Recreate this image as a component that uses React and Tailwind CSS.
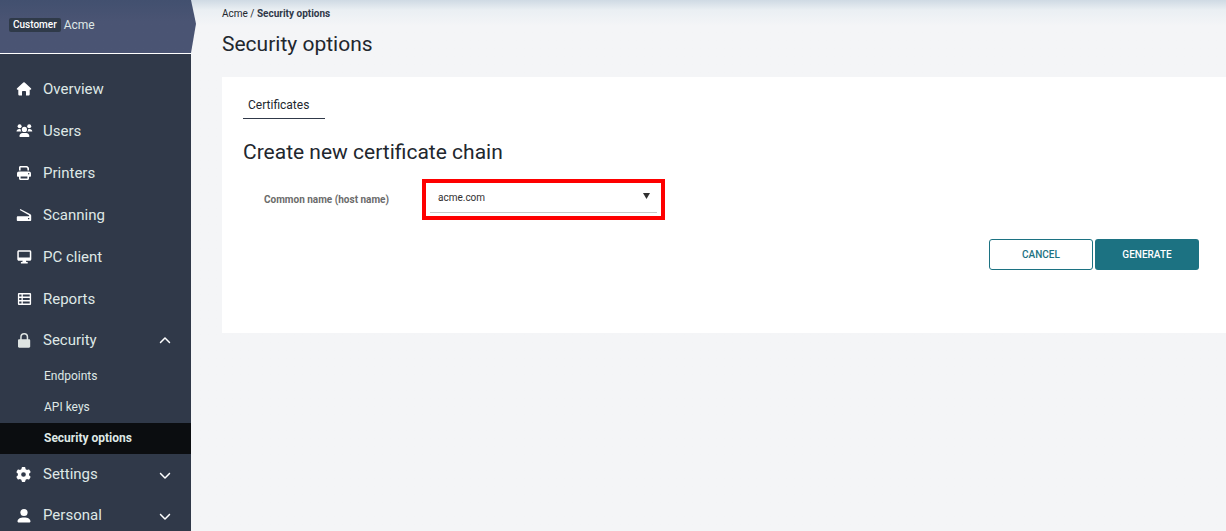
import { FaChevronDown, FaChevronUp, FaGear } from 'react-icons/fa6';

const Glyph = ({ className = '', children }) => (
  <svg viewBox="0 0 16 16" fill="currentColor" aria-hidden="true" className={className}>
    {children}
  </svg>
);

const HouseIcon = (props) => (
  <Glyph {...props}>
    <path d="M8 1.2a1 1 0 0 1 .7.3l6.2 5.7c.7.7.3 1.500-.5 1.500h-.7v4.600c0 .8-.5 1.300-1.300 1.300H10v-3.800a.8.8 0 0 0-.8-.8H6.800a.8.8 0 0 0-.8.8v3.800H3.600c-.8 0-1.300-.5-1.300-1.300V8.700h-.7c-.8 0-1.200-.8-.5-1.500l6.200-5.700A1 1 0 0 1 8 1.200z" />
  </Glyph>
);

const UsersIcon = (props) => (
  <Glyph {...props}>
    <circle cx="3.6" cy="3.2" r="2" />
    <circle cx="13.2" cy="3.2" r="2" />
    <circle cx="8.4" cy="6.4" r="2.6" />
    <path d="M.5 8.6C.5 7 1.7 6 3.2 6h1.3c.2 1.1.3 1.8 1.1 2.6zM16.3 8.6c0-1.6-1.2-2.6-2.7-2.6h-1.3c-.2 1.1-.3 1.8-1.1 2.6zM3.4 13.2c0-2 1.4-3.3 3.2-3.3h3.600c1.800 0 3.200 1.300 3.200 3.300 0 .5-.3.8-.8.8H4.200c-.5 0-.8-.3-.8-.8z" />
  </Glyph>
);

const PrinterIcon = (props) => (
  <Glyph {...props}>
    <path
      fillRule="evenodd"
      d="M4.500 1h6.700L13 2.800V5.500h-1.600V3.400l-.9-.8H4.600v2.900H3V2.500C3 1.600 3.600 1 4.500 1zM3 6.400h10c1.200 0 2 .8 2 2v2.400c0 .6-.4 1-1 1h-1v1.700c0 .9-.6 1.500-1.500 1.500h-7c-.9 0-1.500-.6-1.500-1.500v-1.700H2c-.6 0-1-.4-1-1V8.400c0-1.200.8-2 2-2zm1.600 5v2h6.800v-2zM12.700 8a.7.7 0 1 0 0 1.400.7.7 0 0 0 0-1.400z"
    />
  </Glyph>
);

const ScannerIcon = (props) => (
  <Glyph {...props}>
    <path
      fillRule="evenodd"
      d="M4.3 2 14 6.900c.8.400 1.200.9 1.200 1.700v4.300c0 .7-.4 1.100-1.100 1.100H1.900c-.7 0-1.100-.4-1.100-1.100v-2.600c0-.7.400-1.100 1.100-1.100h11.200v-1L3.800 3zM12 11v1.200h1.300V11z"
    />
  </Glyph>
);

const DesktopIcon = (props) => (
  <Glyph {...props}>
    <path
      fillRule="evenodd"
      d="M2.800 1.200h11c.8 0 1.500.7 1.500 1.500v7.600c0 .8-.7 1.500-1.500 1.500H9.900l.4 1.300h1.400v1.300H4.900v-1.300h1.400l.4-1.300H2.800c-.8 0-1.500-.7-1.500-1.500V2.700c0-.8.7-1.500 1.500-1.500zm0 1.500v5.900h11V2.700z"
    />
  </Glyph>
);

const TableIcon = (props) => (
  <Glyph {...props}>
    <path
      fillRule="evenodd"
      d="M3.200 2h10.600c.8 0 1.300.5 1.300 1.300v9.400c0 .8-.5 1.300-1.300 1.300H3.200c-.8 0-1.300-.5-1.300-1.300V3.300C1.900 2.500 2.400 2 3.200 2zm0 1.500v2h2.300v-2zm3.600 0v2h6.900v-2zM3.200 7v2h2.300V7zm3.600 0v2h6.900V7zm-3.600 3.500v2h2.300v-2zm3.600 0v2h6.900v-2z"
    />
  </Glyph>
);

const LockIcon = () => (
  <Glyph className="size-4 shrink-0 text-[#dfe5e3]">
    <path
      fillRule="evenodd"
      d="M8.200 0a4 4 0 0 1 4 4v2.200h.8c.7 0 1.200.5 1.200 1.200v6.200c0 .7-.5 1.200-1.200 1.200H3.200c-.7 0-1.200-.5-1.200-1.200V7.400c0-.7.500-1.200 1.200-1.200h1V4a4 4 0 0 1 4-4zm0 1.500A2.500 2.500 0 0 0 5.700 4v2.200h5V4a2.500 2.500 0 0 0-2.500-2.500z"
    />
  </Glyph>
);

const GearIcon = () => (
  <span className="flex size-4 shrink-0 items-center text-white">
    <FaGear className="size-[15px]" />
  </span>
);

const PersonIcon = (props) => (
  <Glyph {...props}>
    <circle cx="8" cy="4.5" r="3.6" />
    <path d="M1.500 13.600C1.500 10.800 4 9.400 8 9.400s6.500 1.400 6.500 4.200c0 .5-.3.8-.8.8H2.300c-.5 0-.8-.3-.8-.8z" />
  </Glyph>
);

const mainItems = [
  { label: 'Overview', icon: HouseIcon },
  { label: 'Users', icon: UsersIcon },
  { label: 'Printers', icon: PrinterIcon },
  { label: 'Scanning', icon: ScannerIcon },
  { label: 'PC client', icon: DesktopIcon },
  { label: 'Reports', icon: TableIcon },
];

const securityItems = [
  { label: 'Endpoints' },
  { label: 'API keys' },
  { label: 'Security options', active: true },
];

const ItemContent = ({ icon: Icon, label }) => (
  <>
    <Icon className="size-4 shrink-0 overflow-visible text-white" />
    <span className="ml-[11px]">{label}</span>
  </>
);

const NavGroup = ({ icon, label, open, children }) => {
  const Chevron = open ? FaChevronUp : FaChevronDown;
  return (
    <li>
      <button
        type="button"
        aria-expanded={!!open}
        className="flex h-[41px] w-full items-center pr-5 pl-4 text-[15px] text-[#dfe8e6]"
      >
        <ItemContent icon={icon} label={label} />
        <Chevron className="ml-auto size-3 text-white" />
      </button>
      {children}
    </li>
  );
};

const Sidebar = () => (
  <aside className="w-[191px] shrink-0 bg-[#303949]">
    <div className="relative h-[54px] border-b border-white">
      <div className="absolute top-0 left-0 flex h-[53px] w-[196px] items-center bg-linear-to-b from-[#42506f] to-[#4a5473] to-40% pb-1 pl-[9px] [clip-path:polygon(0_0,191px_0,100%_45%,191px_100%,0_100%)]">
        <span className="rounded-xs bg-[#2f3a49] px-1 text-[10px] leading-[14px] font-medium text-white">Customer</span>
        <span className="ml-[3px] text-xs text-[#dfe8e6]">Acme</span>
      </div>
    </div>
    <nav className="pt-[14px]">
      <ul>
        {mainItems.map((item) => (
          <li key={item.label}>
            <a href="#" className="flex h-[42px] items-center pl-4 text-[15px] text-[#dfe8e6]">
              <ItemContent {...item} />
            </a>
          </li>
        ))}
        <NavGroup icon={LockIcon} label="Security" open>
          <ul>
            {securityItems.map((item) => (
              <li key={item.label}>
                <a
                  href="#"
                  className={`flex h-[31px] items-center pb-0.5 pl-11 text-xs text-[#dfe8e6] ${item.active ? 'bg-[#0b0d10] font-bold' : ''}`}
                >
                  {item.label}
                </a>
              </li>
            ))}
          </ul>
        </NavGroup>
        <NavGroup icon={GearIcon} label="Settings" />
        <NavGroup icon={PersonIcon} label="Personal" />
      </ul>
    </nav>
  </aside>
);

const App = () => {
  return (
    <div className="flex h-screen overflow-hidden bg-[#f4f5f7] font-[Roboto,sans-serif] text-[#22272e]">
      <Sidebar />
      <main className="min-w-0 flex-1 bg-linear-to-b from-[#cfdae4] via-[#eaeff3] via-[10px] to-[#f4f5f7] to-[26px] pl-[31px]">
        <nav aria-label="Breadcrumb" className="pt-[7px] text-[10px] leading-[14px]">
          <a href="#">Acme</a> / <span className="font-bold text-[#303949]">Security options</span>
        </nav>
        <h1 className="mt-[9px] text-[21px] leading-7">Security options</h1>
        <section className="mt-[19px] bg-white px-[21px] pt-4 pb-[63px]">
          <div className="flex">
            <a href="#" className="border-b border-[#303949] pr-4 pl-[5px] text-xs leading-[25px]">
              Certificates
            </a>
          </div>
          <h2 className="mt-[19px] text-[21px] leading-7">Create new certificate chain</h2>
          <form>
            <div className="mt-[13px] flex items-center pl-[21px]">
              <label htmlFor="common-name" className="w-[158px] text-[10px] font-bold text-[#6b6b6b]">
                Common name (host name)
              </label>
              <div className="relative w-[243px] border-4 border-[#fe0000] px-1 pb-[3px]">
                <select
                  id="common-name"
                  className="block h-[30px] w-full appearance-none border-b border-[#c8c8c8] bg-transparent pl-2 text-[10px] text-[#303030] outline-none"
                >
                  <option>acme.com</option>
                </select>
                <svg viewBox="0 0 7 6" className="pointer-events-none absolute top-[10px] right-[11px] h-[6px] w-[7px] fill-[#303030]">
                  <path d="M0 0h7L3.5 6z" />
                </svg>
              </div>
            </div>
            <div className="mt-[19px] flex justify-end gap-[2px] pr-[6px] text-[10px]">
              <button type="button" className="h-[31px] w-[104px] rounded-[3px] border border-[#1c7282] bg-white font-medium text-[#1c7282]">
                CANCEL
              </button>
              <button type="submit" className="h-[31px] w-[104px] rounded-[3px] bg-[#1c7282] font-medium text-white">
                GENERATE
              </button>
            </div>
          </form>
        </section>
      </main>
    </div>
  );
};

export default App;
